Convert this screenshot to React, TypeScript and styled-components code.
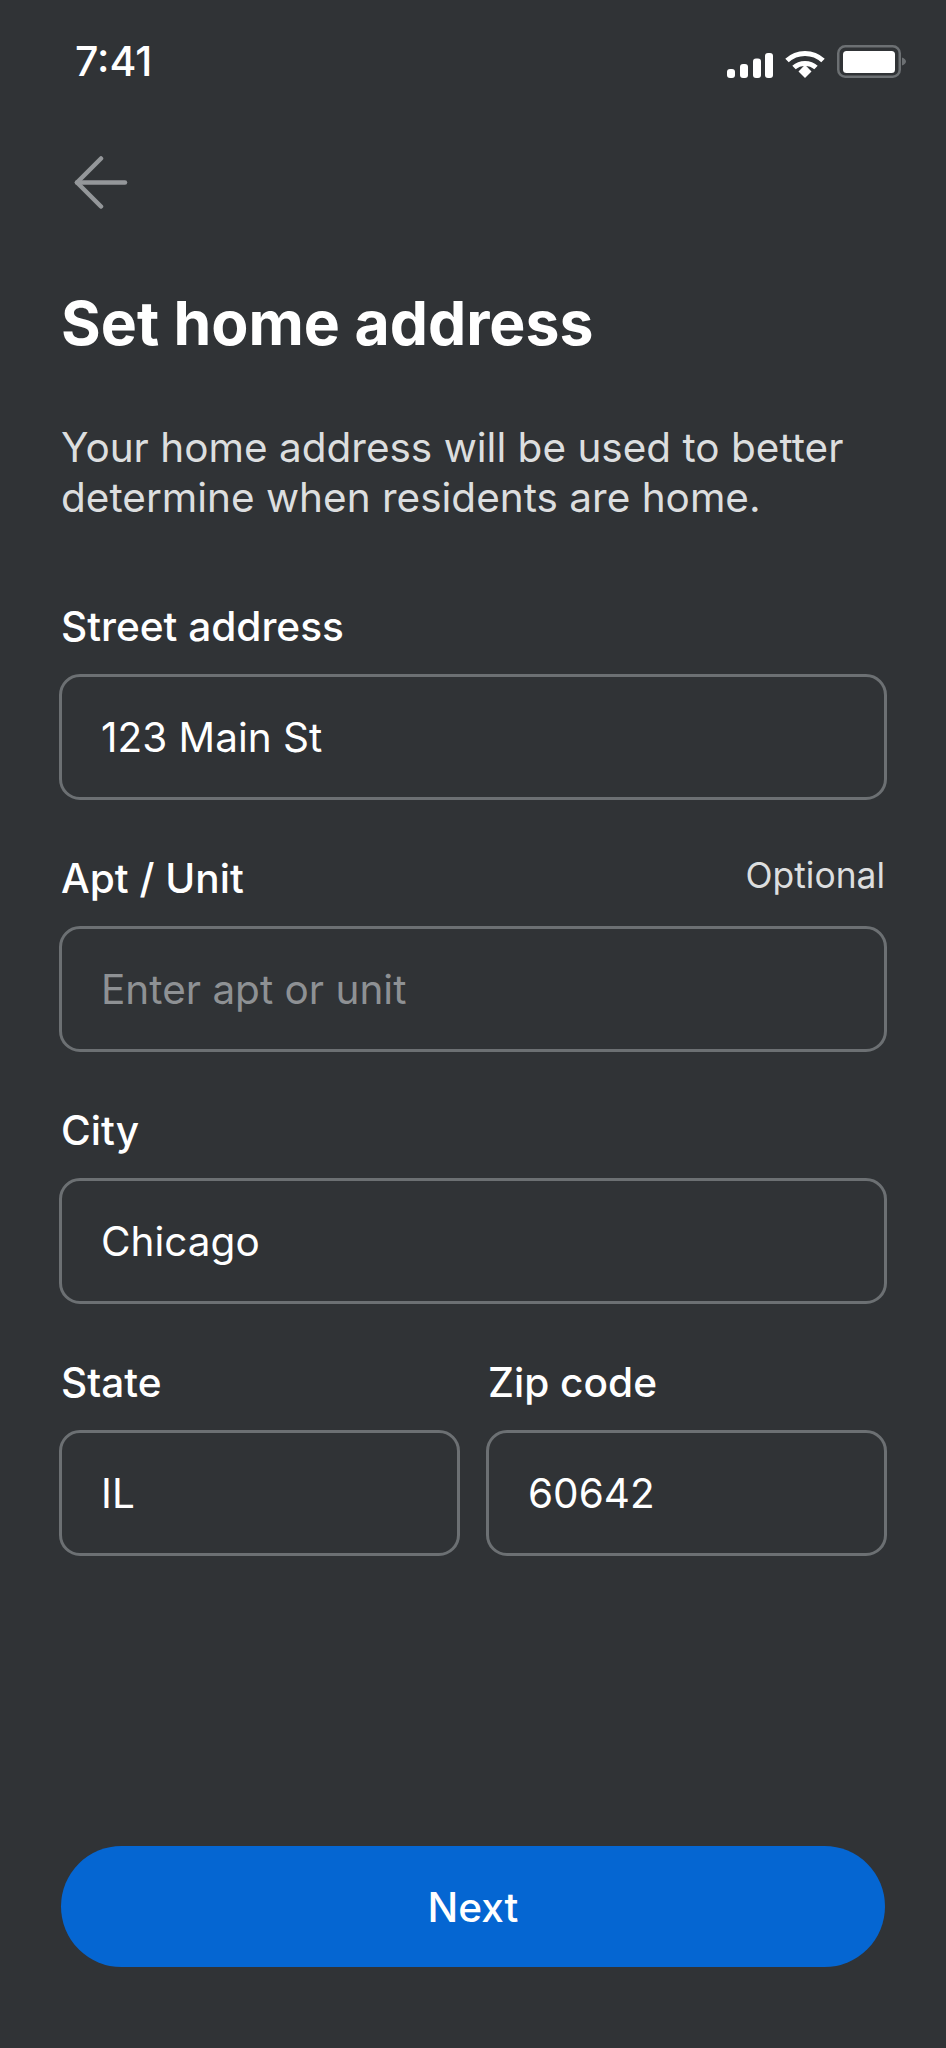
import styled, { createGlobalStyle } from "styled-components";

const GlobalStyle = createGlobalStyle`
  html, body {
    margin: 0;
    padding: 0;
    background: #303336;
  }
  * {
    box-sizing: border-box;
  }
`;

const App = () => {
  return (
    <Screen>
      <GlobalStyle />
      <StatusBar>
        <Time>7:41</Time>
        <StatusIcons>
          <svg width="46" height="25" viewBox="0 0 46 25" fill="#fff">
            <rect x="0" y="16" width="8" height="9" rx="3" />
            <rect x="13" y="11" width="8" height="14" rx="3" />
            <rect x="26" y="5.5" width="8" height="19.5" rx="3" />
            <rect x="38" y="0" width="8" height="25" rx="3" />
          </svg>
          <svg width="40" height="28" viewBox="0 0 40 28" fill="none" stroke="#fff" strokeWidth="5">
            <path d="M2 10.5C12 1 28 1 38 10.5" />
            <path d="M9 17.5C15 12 25 12 31 17.5" />
            <path d="M13.5 21.5L20 14.8L26.5 21.5L20 28Z" fill="#fff" stroke="none" />
          </svg>
          <svg width="69" height="33" viewBox="0 0 69 33" fill="none">
            <rect x="1.25" y="1.25" width="61.5" height="30.5" rx="7" stroke="#6c7073" strokeWidth="2.5" />
            <rect x="6" y="6" width="52" height="22" rx="3.5" fill="#fff" />
            <path d="M65 12.5C67.5 13.5 69 15 69 16.5C69 18 67.5 19.5 65 20.5Z" fill="#6c7073" />
          </svg>
        </StatusIcons>
      </StatusBar>
      <BackButton aria-label="Back">
        <svg width="54" height="53" viewBox="0 0 54 53" fill="none" stroke="#94979a" strokeWidth="4.5" strokeLinecap="round" strokeLinejoin="round">
          <path d="M27 2.5L3 26.5L27 50.5" />
          <path d="M3 26.5H51" />
        </svg>
      </BackButton>
      <Title>Set home address</Title>
      <Description>
        Your home address will be used to better
        <br />
        determine when residents are home.
      </Description>
      <Form>
        <Field>
          <LabelRow>
            <Label>Street address</Label>
          </LabelRow>
          <Input readOnly value="123 Main St" />
        </Field>
        <Field>
          <LabelRow>
            <Label>Apt / Unit</Label>
            <Hint>Optional</Hint>
          </LabelRow>
          <Input readOnly placeholder="Enter apt or unit" />
        </Field>
        <Field>
          <LabelRow>
            <Label>City</Label>
          </LabelRow>
          <Input readOnly value="Chicago" />
        </Field>
        <HalfRow>
          <Field>
            <LabelRow>
              <Label>State</Label>
            </LabelRow>
            <Input readOnly value="IL" />
          </Field>
          <Field>
            <LabelRow>
              <Label>Zip code</Label>
            </LabelRow>
            <Input readOnly value="60642" />
          </Field>
        </HalfRow>
      </Form>
      <NextButton>Next</NextButton>
    </Screen>
  );
};

export default App;

const Screen = styled.div`
  display: flex;
  flex-direction: column;
  width: 946px;
  height: 2048px;
  padding: 0 59px 81px;
  background: #303336;
  color: #fff;
  font-family: Inter, "Liberation Sans", sans-serif;
  overflow: hidden;
`;

const StatusBar = styled.div`
  display: flex;
  justify-content: space-between;
  align-items: flex-start;
  height: 156px;
  padding: 36px 0 0 16px;
  margin-right: -19px;
`;

const Time = styled.div`
  font-size: 41px;
  line-height: 50px;
  font-weight: 500;
`;

const StatusIcons = styled.div`
  display: flex;
  align-items: flex-end;
  gap: 12px;
  padding-top: 9px;
  height: 42px;
`;

const BackButton = styled.button`
  display: block;
  align-self: flex-start;
  width: 54px;
  height: 53px;
  padding: 0;
  margin: 0 0 0 15px;
  border: none;
  background: none;
`;

const Title = styled.h1`
  margin: 75px 0 0 2px;
  font-size: 60.7px;
  line-height: 78px;
  font-weight: 700;
`;

const Description = styled.p`
  margin: 61px 0 0 2px;
  font-size: 40.5px;
  line-height: 50px;
  font-weight: 400;
  color: #dcdedf;
`;

const Form = styled.div`
  display: flex;
  flex-direction: column;
  gap: 57px;
  margin-top: 82px;
`;

const Field = styled.div`
  display: flex;
  flex-direction: column;
  flex: 1;
  min-width: 0;
  gap: 25px;
`;

const LabelRow = styled.div`
  display: flex;
  justify-content: space-between;
  align-items: flex-start;
  height: 44px;
  padding: 0 2px;
`;

const Label = styled.span`
  font-size: 40.6px;
  line-height: 44px;
  font-weight: 500;
`;

const Hint = styled.span`
  font-size: 35.4px;
  line-height: 38px;
  font-weight: 400;
  color: #dcdedf;
`;

const Input = styled.input`
  width: 100%;
  height: 126px;
  padding: 0 39px;
  border: 3px solid #6c7073;
  border-radius: 21px;
  background: transparent;
  color: #fff;
  font-family: inherit;
  font-size: 40.5px;
  outline: none;

  &::placeholder {
    color: #8e9194;
    opacity: 1;
  }
`;

const HalfRow = styled.div`
  display: flex;
  gap: 26px;
`;

const NextButton = styled.button`
  margin: auto 2px 0;
  height: 121px;
  padding: 2px 0 0;
  border: none;
  border-radius: 60.5px;
  background: #0566d2;
  color: #fff;
  font-family: inherit;
  font-size: 40.6px;
  font-weight: 500;
`;
